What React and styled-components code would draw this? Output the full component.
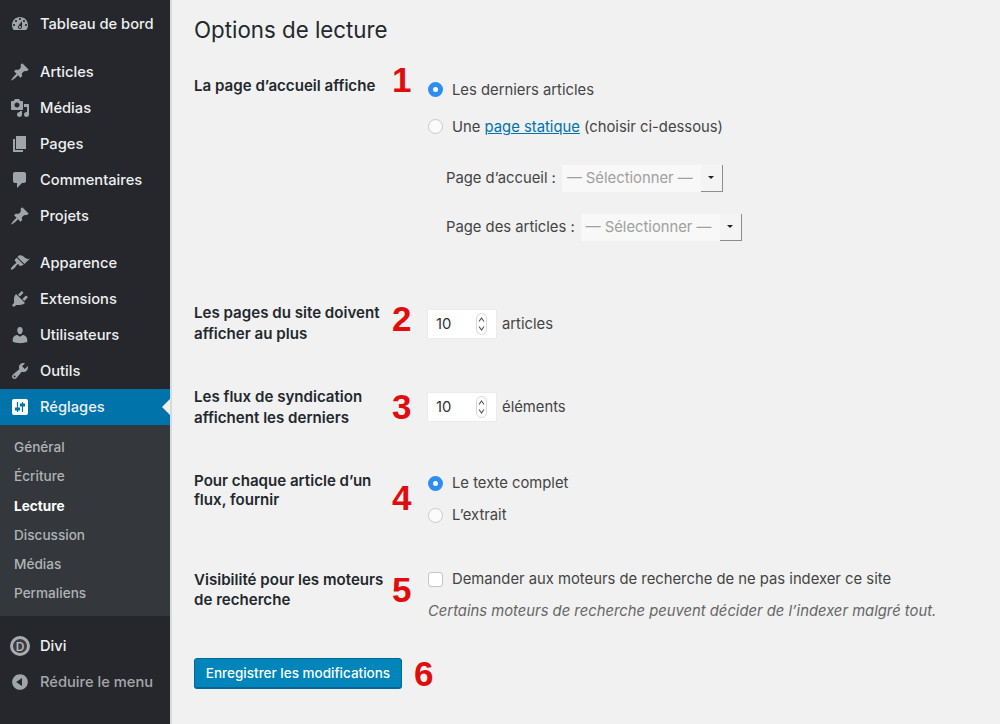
import React from 'react';
import styled, { createGlobalStyle } from 'styled-components';

const GlobalStyle = createGlobalStyle`
  html, body {
    margin: 0;
    padding: 0;
    background: #f1f1f1;
  }
  body {
    font-family: Inter, "Liberation Sans", sans-serif;
    color: #444;
  }
`;

// Dashicons shapes
const icons = {
  dashboard: 'M3.76 16h12.48c1.1-1.37 1.76-3.11 1.76-5 0-4.42-3.58-8-8-8s-8 3.58-8 8c0 1.89.66 3.63 1.76 5zM10 4c.55 0 1 .45 1 1s-.45 1-1 1-1-.45-1-1 .45-1 1-1zM6 6c.55 0 1 .45 1 1s-.45 1-1 1-1-.45-1-1 .45-1 1-1zm8 0c.55 0 1 .45 1 1s-.45 1-1 1-1-.45-1-1 .45-1 1-1zm-5.37 5.55L12 7v6c0 1.1-.9 2-2 2s-2-.9-2-2c0-.57.24-1.08.63-1.45zM4 10c.55 0 1 .45 1 1s-.45 1-1 1-1-.45-1-1 .45-1 1-1zm12 0c.55 0 1 .45 1 1s-.45 1-1 1-1-.45-1-1 .45-1 1-1zm-5 3c0-.55-.45-1-1-1s-1 .45-1 1 .45 1 1 1 1-.45 1-1z',
  pin: 'M10.44 3.02l1.82-1.82 6.36 6.35-1.83 1.82c-1.05-.68-2.48-.57-3.41.36l-.75.75c-.92.93-1.04 2.35-.35 3.41l-1.83 1.82-2.41-2.41-2.8 2.79c-.42.42-3.38 2.71-3.8 2.29s1.86-3.39 2.28-3.81l2.79-2.79L4.1 9.36l1.83-1.82c1.05.69 2.48.57 3.4-.36l.75-.75c.93-.92 1.05-2.35.36-3.41z',
  media: 'M13 11V4c0-.55-.45-1-1-1h-1.67L9 1H5L3.67 3H2c-.55 0-1 .45-1 1v7c0 .55.45 1 1 1h10c.55 0 1-.45 1-1zM7 4.5c1.38 0 2.5 1.12 2.5 2.5S8.38 9.5 7 9.5 4.5 8.38 4.5 7 5.62 4.5 7 4.5zM14 6h5v10.5c0 1.38-1.12 2.5-2.5 2.5S14 17.88 14 16.5s1.12-2.5 2.5-2.5c.17 0 .34.02.5.05V9h-3V6zm-4 8.05V13h2v3.5c0 1.38-1.12 2.5-2.5 2.5S7 17.88 7 16.5 8.12 14 9.5 14c.17 0 .34.02.5.05z',
  page: 'M6 15V2h10v13H6zm-1 1h8v2H3V5h2v11z',
  comment: 'M5 2h9c1.1 0 2 .9 2 2v7c0 1.1-.9 2-2 2h-2l-5 5v-5H5c-1.1 0-2-.9-2-2V4c0-1.1.9-2 2-2z',
  brush: 'M14.48 11.06L7.41 3.99l1.5-1.5c.5-.56 2.3-.47 3.51.32 1.21.8 1.43 1.28 2.91 2.1 1.18.64 2.45 1.26 4.45.85zM13.77 11.77L6.7 4.7 4.93 6.47c-.39.39-.39 1.02 0 1.41l1.06 1.06c.39.39.39 1.03 0 1.42-.6.6-1.43 1.11-2.21 1.69-.35.26-.7.53-1.01.84-1.34 1.34-2.37 2.77-1.6 3.54.78.78 2.2-.25 3.54-1.6.31-.31.58-.66.84-1.01.58-.78 1.09-1.61 1.69-2.21.39-.39 1.02-.39 1.41 0l1.06 1.06c.39.39 1.02.39 1.41 0z',
  plugin: 'M13.11 4.36L9.87 7.6 8 5.73l3.24-3.24c.35-.34 1.05-.2 1.56.32.52.51.66 1.21.31 1.55zm-8 1.77l.91-1.12 9.01 9.01-1.19.84c-.71.71-2.63 1.16-3.82 1.16H6.14L4.9 17.26c-.59.59-1.54.59-2.12 0-.59-.58-.59-1.53 0-2.12l1.24-1.24v-3.88c0-1.13.4-3.19 1.09-3.89zm7.26 3.97l3.24-3.24c.34-.35 1.04-.21 1.55.31.52.51.66 1.21.31 1.55l-3.24 3.25z',
  user: 'M10 9.25c-2.27 0-2.73-3.44-2.73-3.44C7 4.02 7.82 2 9.97 2c2.16 0 2.98 2.02 2.71 3.81 0 0-.41 3.44-2.68 3.44zm0 2.57L12.72 10c2.39 0 4.52 2.33 4.52 4.53v2.49s-3.65 1.13-7.24 1.13c-3.65 0-7.24-1.13-7.24-1.13v-2.49c0-2.25 1.94-4.48 4.47-4.48z',
  wrench: 'M16.68 9.77c-1.34 1.34-3.3 1.67-4.95.99l-5.41 6.52c-.99.99-2.59.99-3.58 0s-.99-2.59 0-3.57l6.52-5.42c-.68-1.65-.35-3.61.99-4.95 1.28-1.28 3.12-1.62 4.72-1.06l-2.89 2.89 2.82 2.82 2.86-2.87c.53 1.58.18 3.39-1.08 4.65zM3.81 16.21c.4.39 1.04.39 1.43 0 .4-.4.4-1.04 0-1.43-.39-.4-1.03-.4-1.43 0-.39.39-.39 1.03 0 1.43z',
  settings: 'M16 2H4a2 2 0 0 0-2 2v12a2 2 0 0 0 2 2h12a2 2 0 0 0 2-2V4a2 2 0 0 0-2-2zM6.9 5h1.2v5.5h2v3h-2V15H6.9v-1.5h-2v-3h2zM11.9 5h1.2v1.5h2v3h-2V15h-1.2V9.5h-2v-3h2z',
  collapse: 'M10 2.16c4.33 0 7.84 3.51 7.84 7.84s-3.51 7.84-7.84 7.84S2.16 14.33 2.16 10 5.71 2.16 10 2.16zm2 11.72V6.12L6.18 9.97z',
};

const Page = styled.div`
  display: flex;
  width: 1000px;
  height: 724px;
  overflow: hidden;
  background: #f1f1f1;
`;

// Sidebar
const Sidebar = styled.nav`
  width: 170px;
  flex: none;
  display: flex;
  flex-direction: column;
  padding-top: 5px;
  background: #25272c;
  border-right: 2px solid #d9dadb;
`;

const MenuItem = styled.div`
  position: relative;
  display: flex;
  align-items: center;
  gap: 10px;
  box-sizing: border-box;
  height: 36px;
  flex: none;
  padding-left: 10px;
  padding-top: ${p => (p.$active ? 0 : 2)}px;
  margin-top: ${p => p.$top || 0}px;
  background: ${p => (p.$active ? '#0073aa' : 'transparent')};
  color: ${p => (p.$dim ? '#a5a7aa' : '#eef0f1')};
  font-size: 14.7px;
  font-weight: 500;
  white-space: nowrap;

  svg {
    fill: ${p => (p.$active ? '#fff' : '#a0a5aa')};
    fill-rule: ${p => (p.$active ? 'evenodd' : 'nonzero')};
  }
`;

const ActiveArrow = styled.span`
  position: absolute;
  right: 0;
  top: 10px;
  border: 8px solid transparent;
  border-left: 0;
  border-right-color: #f1f1f1;
`;

const SubMenu = styled.div`
  display: flex;
  flex-direction: column;
  flex: none;
  height: 191px;
  padding-top: 8px;
  box-sizing: border-box;
  background: #34373c;
`;

const SubItem = styled.div`
  height: 29.3px;
  line-height: 29.3px;
  padding-left: 14px;
  font-size: 13.6px;
  font-weight: ${p => (p.$current ? 700 : 500)};
  color: ${p => (p.$current ? '#fff' : '#b0b3b6')};
`;

const DiviBadge = styled.span`
  display: flex;
  align-items: center;
  justify-content: center;
  width: 20px;
  height: 20px;
  box-sizing: border-box;
  border-radius: 50%;
  border: 3px solid #a9acaf;
  background: #3a3c40;
  color: #b4b7ba;
  font-size: 12px;
  font-weight: 600;
`;

// Main column
const Main = styled.main`
  flex: 1;
  padding: 15px 0 0 22px;
`;

const Title = styled.h1`
  margin: 0;
  font-size: 22.3px;
  font-weight: 400;
  line-height: 30px;
  color: #23282d;
`;

const Row = styled.section`
  display: grid;
  grid-template-columns: 198px 36px 1fr;
  margin-top: ${p => p.$top}px;
`;

const SubmitRow = styled.section`
  display: flex;
  gap: 12px;
  margin-top: ${p => p.$top}px;
`;

const RowLabel = styled.div`
  font-size: 15.1px;
  font-weight: 600;
  line-height: ${p => p.$lh || 21}px;
  color: #23282d;
`;

const Mark = styled.div`
  font-family: "Liberation Sans", sans-serif;
  font-size: 35px;
  font-weight: 700;
  line-height: 35px;
  margin-top: ${p => p.$top || 0}px;
  color: #e10d0d;
`;

const Field = styled.div`
  display: flex;
  flex-direction: column;
  margin-top: ${p => p.$top || 0}px;
  font-size: 14.8px;
  color: #444;
`;

const Line = styled.div`
  display: flex;
  align-items: center;
  gap: ${p => p.$gap || 9}px;
  height: ${p => p.$h || 32}px;
  white-space: nowrap;
`;

const Radio = styled.span`
  width: 15px;
  height: 15px;
  box-sizing: border-box;
  flex: none;
  border-radius: 50%;
  background: ${p => (p.$on ? '#fff' : '#fbfbfb')};
  border: ${p => (p.$on ? '5px solid #2d8df2' : '1px solid #c9c9c9')};
`;

const Checkbox = styled.span`
  width: 15px;
  height: 15px;
  box-sizing: border-box;
  flex: none;
  border-radius: 3px;
  background: #fff;
  border: 1px solid #c4c4c4;
`;

const PageLink = styled.a`
  color: #0073aa;
  text-decoration: underline;
`;

const SelectLine = styled.div`
  display: flex;
  align-items: center;
  gap: 6px;
  padding-left: 18px;
  margin-top: ${p => p.$top || 0}px;
  height: 28px;
  white-space: nowrap;
`;

const SelectBox = styled.div`
  display: flex;
  align-items: center;
  width: 161px;
  height: 27px;
  background: #f8f8f8;
  color: #a0a0a0;
`;

const SelectText = styled.span`
  flex: 1;
  padding-left: 5px;
`;

const SelectButton = styled.span`
  display: flex;
  align-items: center;
  justify-content: center;
  box-sizing: border-box;
  width: 22px;
  height: 27px;
  background: #f4f4f4;
  border-right: 1px solid #8d8d8d;
  border-bottom: 1px solid #8d8d8d;

  &::after {
    content: '';
    border: 3px solid transparent;
    border-top: 3px solid #222;
    border-bottom: 0;
  }
`;

const NumberBox = styled.div`
  display: flex;
  align-items: center;
  justify-content: space-between;
  box-sizing: border-box;
  width: 68px;
  height: 28px;
  padding: 0 9px 0 8px;
  background: #fff;
  box-shadow: 0 0 1px rgba(0, 0, 0, 0.15);
  color: #333;
`;

const Spinner = styled.svg`
  width: 11px;
  height: 22px;
`;

const Hint = styled.em`
  font-size: 14.8px;
  color: #666;
`;

const SaveButton = styled.button`
  height: 30px;
  width: 208px;
  padding: 0;
  border: 1px solid #006799;
  border-radius: 3px;
  background: #0085ba;
  box-shadow: 0 1px 0 #006799;
  color: #fff;
  font-family: inherit;
  font-size: 13.5px;
  font-weight: 500;
`;

const Icon = ({ name }) => (
  <svg width="20" height="20" viewBox="0 0 20 20"><path d={icons[name]} /></svg>
);

const Stepper = () => (
  <Spinner viewBox="0 0 11 22">
    <rect x="0.5" y="0.5" width="10" height="21" rx="5" fill="#fff" stroke="#d6d6d6" />
    <path d="M3 8.5 5.5 5 8 8.5M3 13.5 5.5 17 8 13.5" fill="none" stroke="#555" strokeWidth="1.1" />
  </Spinner>
);

const mainMenu = [
  { icon: 'pin', label: 'Articles', top: 12 },
  { icon: 'media', label: 'Médias' },
  { icon: 'page', label: 'Pages' },
  { icon: 'comment', label: 'Commentaires' },
  { icon: 'pin', label: 'Projets' },
  { icon: 'brush', label: 'Apparence', top: 11 },
  { icon: 'plugin', label: 'Extensions' },
  { icon: 'user', label: 'Utilisateurs' },
  { icon: 'wrench', label: 'Outils' },
];

const subMenu = ['Général', 'Écriture', 'Lecture', 'Discussion', 'Médias', 'Permaliens'];

export default function App() {
  return (
    <Page>
      <GlobalStyle />
      <Sidebar>
        <MenuItem><Icon name="dashboard" />Tableau de bord</MenuItem>
        {mainMenu.map((item) => (
          <MenuItem key={item.label} $top={item.top}><Icon name={item.icon} />{item.label}</MenuItem>
        ))}
        <MenuItem $active $top={1}><Icon name="settings" />Réglages<ActiveArrow /></MenuItem>
        <SubMenu>
          {subMenu.map((label) => (
            <SubItem key={label} $current={label === 'Lecture'}>{label}</SubItem>
          ))}
        </SubMenu>
        <MenuItem $top={11}><DiviBadge>D</DiviBadge>Divi</MenuItem>
        <MenuItem $dim><Icon name="collapse" />Réduire le menu</MenuItem>
      </Sidebar>

      <Main>
        <Title>Options de lecture</Title>

        <Row $top={30}>
          <RowLabel>La page d’accueil affiche</RowLabel>
          <Mark $top={-13}>1</Mark>
          <Field $top={-4}>
            <Line $h={37}><Radio $on />Les derniers articles</Line>
            <Line $h={37}><Radio /><span>Une <PageLink>page statique</PageLink> (choisir ci-dessous)</span></Line>
            <SelectLine $top={19}>Page d’accueil : <SelectBox><SelectText>— Sélectionner —</SelectText><SelectButton /></SelectBox></SelectLine>
            <SelectLine $top={21}>Page des articles : <SelectBox><SelectText>— Sélectionner —</SelectText><SelectButton /></SelectBox></SelectLine>
          </Field>
        </Row>

        <Row $top={61}>
          <RowLabel>Les pages du site doivent afficher au plus</RowLabel>
          <Mark $top={-1}>2</Mark>
          <Field $top={8}><Line $h={28} $gap={6}><NumberBox>10<Stepper /></NumberBox>articles</Line></Field>
        </Row>

        <Row $top={42}>
          <RowLabel>Les flux de syndication affichent les derniers</RowLabel>
          <Mark $top={3}>3</Mark>
          <Field $top={7}><Line $h={28} $gap={6}><NumberBox>10<Stepper /></NumberBox>éléments</Line></Field>
        </Row>

        <Row $top={43}>
          <RowLabel $lh={19}>Pour chaque article d’un flux, fournir</RowLabel>
          <Mark $top={9}>4</Mark>
          <Field $top={-4}>
            <Line $h={32}><Radio $on />Le texte complet</Line>
            <Line $h={32}><Radio />L’extrait</Line>
          </Field>
        </Row>

        <Row $top={39}>
          <RowLabel $lh={20}>Visibilité pour les moteurs de recherche</RowLabel>
          <Mark $top={2}>5</Mark>
          <Field $top={-7}>
            <Line $h={32}><Checkbox />Demander aux moteurs de recherche de ne pas indexer ce site</Line>
            <Line $h={32}><Hint>Certains moteurs de recherche peuvent décider de l’indexer malgré tout.</Hint></Line>
          </Field>
        </Row>

        <SubmitRow $top={31}>
          <SaveButton>Enregistrer les modifications</SaveButton>
          <Mark $top={-2}>6</Mark>
        </SubmitRow>
      </Main>
    </Page>
  );
}
